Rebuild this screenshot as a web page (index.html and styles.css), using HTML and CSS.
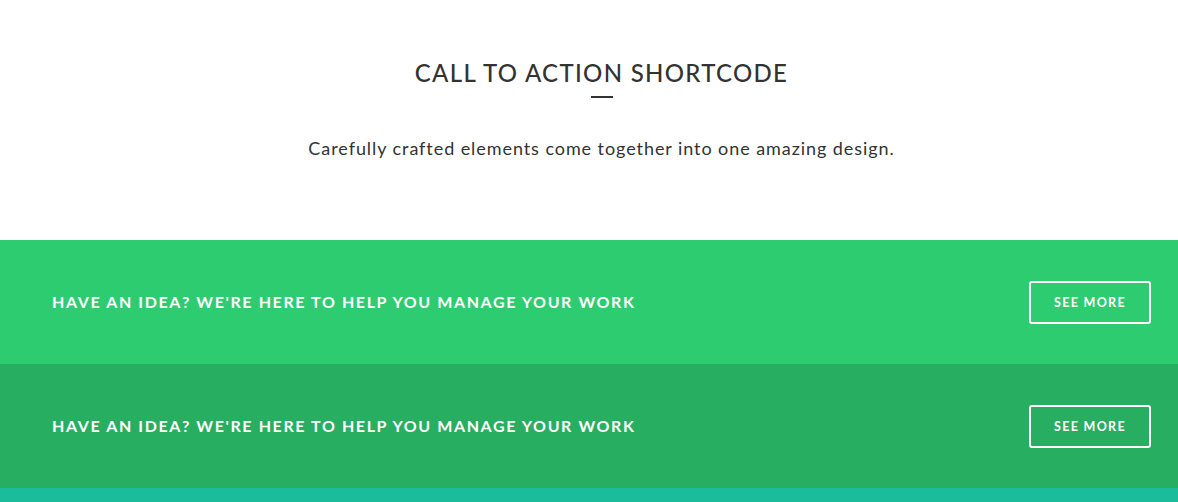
FILE: index.html
```html
<!DOCTYPE html>
<html>
<head>
<meta charset="utf-8">
<link rel="stylesheet" href="styles.css">
</head>
<body>
<section class="intro">
  <h2 class="title">CALL TO ACTION SHORTCODE</h2>
  <span class="rule"></span>
  <p class="lead">Carefully crafted elements come together into one amazing design.</p>
</section>
<section class="cta cta-emerald">
  <h3 class="cta-text">HAVE AN IDEA? WE'RE HERE TO HELP YOU MANAGE YOUR WORK</h3>
  <a class="btn" href="#">SEE MORE</a>
</section>
<section class="cta cta-nephritis">
  <h3 class="cta-text">HAVE AN IDEA? WE'RE HERE TO HELP YOU MANAGE YOUR WORK</h3>
  <a class="btn" href="#">SEE MORE</a>
</section>
<section class="cta-strip cta-turquoise"></section>
</body>
</html>
```
FILE: styles.css
```css
* { box-sizing: border-box; }
html, body { margin: 0; padding: 0; }
body {
  font-family: Lato, "Open Sans", sans-serif;
  color: #333;
  background: #fff;
  overflow: hidden;
}
.intro {
  height: 240px;
  display: flex;
  flex-direction: column;
  align-items: center;
  padding: 60px 27px 0 52px;
}
.title {
  margin: 0;
  font-size: 24px;
  font-weight: 500;
  letter-spacing: 1.3px;
  line-height: 26px;
  color: #333;
}
.rule {
  display: block;
  width: 22px;
  height: 2px;
  background: #333;
  margin-top: 10px;
}
.lead {
  margin: 38px 0 0;
  font-size: 18px;
  font-weight: 400;
  letter-spacing: 0.93px;
  line-height: 24px;
  color: #333;
}
.cta {
  height: 124px;
  display: flex;
  align-items: center;
  justify-content: space-between;
  padding: 0 27px 2px 52px;
}
.cta-emerald { background: #2ecc71; }
.cta-nephritis { background: #27ae60; }
.cta-turquoise { background: #1abc9c; }
.cta-strip { height: 14px; }
.cta-text {
  margin: 0;
  color: #fff;
  font-size: 16px;
  font-weight: 700;
  letter-spacing: 1.6px;
}
.btn {
  display: flex;
  align-items: center;
  justify-content: center;
  width: 122px;
  height: 43px;
  margin-top: 2px;
  border: 2px solid #fff;
  border-radius: 3px;
  color: #fff;
  text-decoration: none;
  font-size: 12.5px;
  font-weight: 700;
  letter-spacing: 1.3px;
}
```
